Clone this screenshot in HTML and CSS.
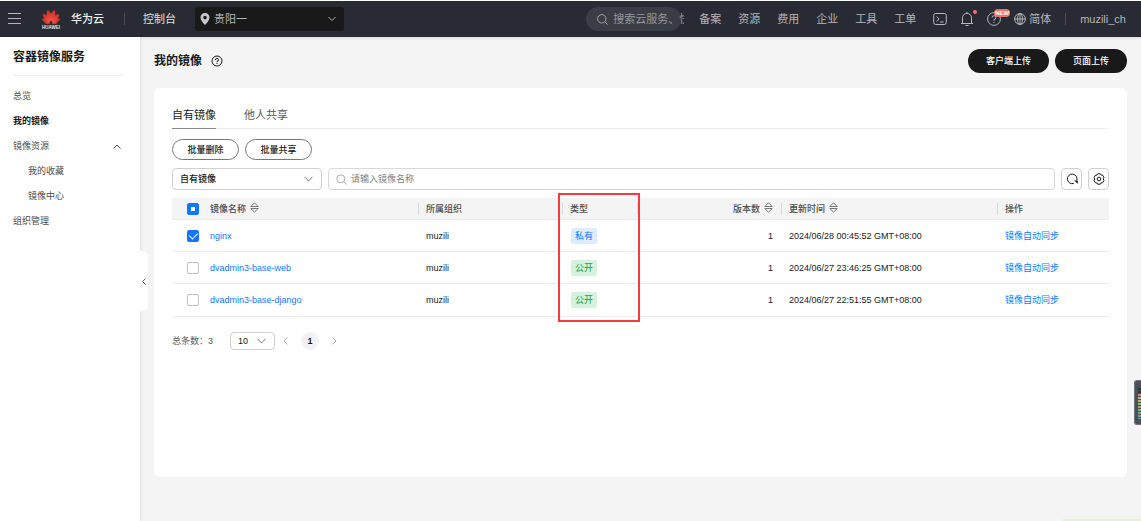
FILE: index.html
```html
<!DOCTYPE html>
<html lang="zh-CN">
<head>
<meta charset="utf-8">
<meta name="viewport" content="width=device-width, initial-scale=1">
<title>容器镜像服务</title>
<link rel="stylesheet" href="styles.css">
</head>
<body>
<header class="topbar">
  <button class="icon-btn menu" type="button" aria-label="菜单"><svg width="14" height="12" viewBox="0 0 14 12" stroke="currentColor" stroke-width="1"><path d="M0 .5h13M0 5.500h13M0 10.500h13"/></svg></button>
  <a class="brand" href="#">
    <svg class="logo" width="20" height="22" viewBox="0 0 40 44" role="img" aria-label="HUAWEI">
      <defs>
        <linearGradient id="petal-fill" x1="0" y1="1" x2="0" y2="0"><stop offset="0" stop-color="#f0584a"/><stop offset="1" stop-color="#cf2a22"/></linearGradient>
        <path id="petal" fill="url(#petal-fill)" d="M0-3C-5-9-6-18-2-25q2-3 4 0C6-18 5-9 0-3z"/>
      </defs>
      <g transform="translate(20 30)">
        <use href="#petal" transform="rotate(-14)"/>
        <use href="#petal" transform="rotate(14)"/>
        <use href="#petal" transform="rotate(-42) scale(.9)"/>
        <use href="#petal" transform="rotate(42) scale(.9)"/>
        <use href="#petal" transform="rotate(-66) scale(.75)"/>
        <use href="#petal" transform="rotate(66) scale(.75)"/>
        <use href="#petal" transform="rotate(-88) scale(.5)"/>
        <use href="#petal" transform="rotate(88) scale(.5)"/>
      </g>
      <text class="logo-text" x="20" y="42" text-anchor="middle">HUAWEI</text>
    </svg>
    <span>华为云</span>
  </a>
  <span class="bar"></span>
  <a class="console" href="#">控制台</a>
  <div class="region">
    <svg class="pin" width="10" height="12" viewBox="0 0 10 12"><path fill="currentColor" fill-rule="evenodd" d="M5 0a4.500 4.500 0 0 0-4.500 4.500C.5 7.500 5 12 5 12s4.500-4.500 4.500-7.500A4.500 4.500 0 0 0 5 0zm0 2.800a1.800 1.800 0 1 1 0 3.600 1.800 1.800 0 0 1 0-3.600z"/></svg>
    <select aria-label="区域"><option>贵阳一</option></select>
    <svg class="chev" width="8" height="5" viewBox="0 0 8 5" fill="none" stroke="currentColor"><path d="M.5.5 4 4 7.500.5"/></svg>
  </div>
  <div class="top-right">
    <label class="top-search">
      <svg width="11" height="11" viewBox="0 0 11 11" fill="none" stroke="currentColor"><circle cx="4.800" cy="4.800" r="4.200"/><path d="m8 8 2.600 2.600"/></svg>
      <input type="text" aria-label="搜索" placeholder="搜索云服务、快捷操作">
    </label>
    <nav class="top-nav">
      <a href="#">备案</a><a href="#">资源</a><a href="#">费用</a><a href="#">企业</a><a href="#">工具</a><a href="#">工单</a>
    </nav>
    <div class="tools">
      <button class="icon-btn" type="button" aria-label="终端"><svg width="14" height="14" viewBox="0 0 14 14" fill="none" stroke="currentColor"><rect x=".7" y="1.500" width="12.600" height="11" rx="2"/><path d="m3.500 4.500 2.600 2.500-2.600 2.500M7 10h3.500"/></svg></button>
      <button class="icon-btn" type="button" aria-label="通知"><svg width="14" height="14" viewBox="0 0 14 14" fill="none" stroke="currentColor"><path d="M1 11.500h12M2.500 11.500V5.800a4.500 4.500 0 0 1 9 0v5.700M5.500 13.500h3M7 0v1.500"/></svg><i class="dot"></i></button>
      <button class="icon-btn" type="button" aria-label="帮助"><svg width="14" height="14" viewBox="0 0 14 14" fill="none" stroke="currentColor"><circle cx="7" cy="7" r="6.400"/><path d="M5.100 5.600A1.900 1.900 0 1 1 7 7.500v1.200M7 9.800v1.200"/></svg><b class="new">NEW</b></button>
      <a class="lang" href="#"><svg width="12" height="12" viewBox="0 0 12 12" fill="none" stroke="currentColor"><circle cx="6" cy="6" r="5.400"/><ellipse cx="6" cy="6" rx="2.500" ry="5.400"/><path d="M.6 6h10.800M6 .6v10.800"/></svg>简体</a>
    </div>
    <span class="bar"></span>
    <a class="user" href="#">muzili_ch</a>
  </div>
</header>

<div class="layout">
  <aside class="sidebar">
    <h1>容器镜像服务</h1>
    <nav>
      <a href="#">总览</a>
      <a class="current" href="#">我的镜像</a>
      <a class="group" href="#">镜像资源<svg width="8" height="5" viewBox="0 0 8 5" fill="none" stroke="currentColor"><path d="M.5 4.500 4 1l3.500 3.500"/></svg></a>
      <a class="sub" href="#">我的收藏</a>
      <a class="sub" href="#">镜像中心</a>
      <a href="#">组织管理</a>
    </nav>
    <button class="collapse" type="button" aria-label="收起"><svg width="4" height="7" viewBox="0 0 4 7" fill="none" stroke="currentColor"><path d="M3.500.5.7 3.500l2.800 3"/></svg></button>
  </aside>

  <main>
    <div class="page-head">
      <h2>我的镜像</h2>
      <svg class="help" width="12" height="12" viewBox="0 0 12 12" fill="none" stroke="currentColor"><circle cx="6" cy="6" r="5"/><path d="M4.500 5A1.500 1.500 0 1 1 6 6.400v.8M6 8v1"/></svg>
      <div class="head-actions">
        <button class="primary" type="button">客户端上传</button>
        <button class="primary" type="button">页面上传</button>
      </div>
    </div>

    <section class="card">
      <div class="tabs" role="tablist">
        <button class="tab active" role="tab" aria-selected="true" type="button">自有镜像</button>
        <button class="tab" role="tab" aria-selected="false" type="button">他人共享</button>
      </div>
      <div class="batch">
        <button class="outline" type="button">批量删除</button>
        <button class="outline" type="button">批量共享</button>
      </div>
      <div class="filters">
        <div class="select kind">
          <select aria-label="镜像类别"><option>自有镜像</option></select>
          <svg class="chev" width="9" height="6" viewBox="0 0 9 6" fill="none" stroke="currentColor"><path d="M.5.8 4.500 5 8.500.8"/></svg>
        </div>
        <label class="search">
          <svg width="11" height="11" viewBox="0 0 11 11" fill="none" stroke="currentColor"><circle cx="4.800" cy="4.800" r="4"/><path d="m8 8 2.500 2.500"/></svg>
          <input type="text" aria-label="镜像名称" placeholder="请输入镜像名称">
        </label>
        <button class="square" type="button" aria-label="刷新"><svg width="12" height="12" viewBox="0 0 12 12" fill="none" stroke="currentColor"><path d="M7.800 10.400A4.800 4.800 0 1 1 10.700 7.500"/><path d="M8.200 7.500h3.600v3.300z" fill="currentColor" stroke="none"/></svg></button>
        <button class="square" type="button" aria-label="设置"><svg width="12" height="12" viewBox="0 0 12 12" fill="none" stroke="currentColor"><path d="M4.700.8h2.600l.8 1.300 1.600.1 1.200 2.200L10.200 6l.7 1.500-1.200 2.200-1.600.2-.8 1.300H4.700l-.8-1.300-1.600-.2-1.200-2.200L1.800 6l-.7-1.600 1.200-2.200 1.600-.1z"/><circle cx="6" cy="6" r="1.800"/></svg></button>
      </div>

      <table>
        <colgroup><col class="c-check"><col class="c-name"><col class="c-org"><col class="c-type"><col class="c-ver"><col class="c-time"><col class="c-op"></colgroup>
        <thead>
          <tr>
            <th class="check"><input class="mixed" type="checkbox" aria-label="全选"></th>
            <th class="first">镜像名称<svg class="sort" width="9" height="11" viewBox="0 0 9 11" fill="none" stroke="currentColor"><path d="M.8 4.500h7.400L4.500.8zM.8 6.500h7.400L4.500 10.200z"/></svg></th>
            <th>所属组织</th>
            <th>类型<span class="highlight"></span></th>
            <th class="num">版本数<svg class="sort" width="9" height="11" viewBox="0 0 9 11" fill="none" stroke="currentColor"><path d="M.8 4.500h7.400L4.500.8zM.8 6.500h7.400L4.500 10.200z"/></svg></th>
            <th>更新时间<svg class="sort" width="9" height="11" viewBox="0 0 9 11" fill="none" stroke="currentColor"><path d="M.8 4.500h7.400L4.500.8zM.8 6.500h7.400L4.500 10.200z"/></svg></th>
            <th>操作</th>
          </tr>
        </thead>
        <tbody>
          <tr>
            <td class="check"><input type="checkbox" aria-label="nginx" checked></td>
            <td><a href="#">nginx</a></td><td>muzili</td><td><span class="tag private">私有</span></td>
            <td class="num">1</td><td>2024/06/28 00:45:52 GMT+08:00</td><td><a href="#">镜像自动同步</a></td>
          </tr>
          <tr>
            <td class="check"><input type="checkbox" aria-label="dvadmin3-base-web"></td>
            <td><a href="#">dvadmin3-base-web</a></td><td>muzili</td><td><span class="tag public">公开</span></td>
            <td class="num">1</td><td>2024/06/27 23:46:25 GMT+08:00</td><td><a href="#">镜像自动同步</a></td>
          </tr>
          <tr>
            <td class="check"><input type="checkbox" aria-label="dvadmin3-base-django"></td>
            <td><a href="#">dvadmin3-base-django</a></td><td>muzili</td><td><span class="tag public">公开</span></td>
            <td class="num">1</td><td>2024/06/27 22:51:55 GMT+08:00</td><td><a href="#">镜像自动同步</a></td>
          </tr>
        </tbody>
      </table>

      <div class="pager">
        <span>总条数：3</span>
        <div class="select size">
          <select aria-label="每页条数"><option>10</option></select>
          <svg class="chev" width="9" height="6" viewBox="0 0 9 6" fill="none" stroke="currentColor"><path d="M.5.8 4.500 5 8.500.8"/></svg>
        </div>
        <button class="icon-btn" type="button" aria-label="上一页"><svg width="5" height="8" viewBox="0 0 5 8" fill="none" stroke="currentColor"><path d="M4.500.5 1 4l3.500 3.500"/></svg></button>
        <button class="page" type="button">1</button>
        <button class="icon-btn" type="button" aria-label="下一页"><svg width="5" height="8" viewBox="0 0 5 8" fill="none" stroke="currentColor"><path d="M.5.5 4 4 .5 7.500"/></svg></button>
      </div>
    </section>
  </main>
</div>

<div class="meter" aria-hidden="true"><i></i></div>
<div class="toast-edge"></div>
</body>
</html>
```

FILE: styles.css
```css
* { box-sizing: border-box; }

body {
  margin: 0;
  min-height: 100vh;
  display: flex;
  flex-direction: column;
  position: relative;
  overflow-x: hidden;
  border-top: 1px solid #fff;
  background: #f4f4f4;
  color: #191919;
  font: 9px/14px "Liberation Sans", "Noto Sans CJK SC", sans-serif;
}

a { color: inherit; text-decoration: none; }
button, input, select { font: inherit; color: inherit; margin: 0; }
button { border: 0; background: none; padding: 0; cursor: pointer; white-space: nowrap; }
svg { display: block; flex: none; }
select { appearance: none; border: 0; background: none; width: 100%; height: 100%; outline: 0; }
input[type="text"] { border: 0; background: none; outline: 0; padding: 0; min-width: 0; flex: 1; }
h1, h2 { margin: 0; font-size: 12px; line-height: 18px; font-weight: 700; }

.icon-btn { position: relative; display: flex; align-items: center; justify-content: center; }
.chev { position: absolute; right: 8px; top: 50%; transform: translateY(-50%); pointer-events: none; }

/* top bar */
.topbar {
  display: flex;
  align-items: center;
  height: 36px;
  padding: 0 15px 0 8px;
  background: #282b33;
  color: #b4b6bb;
  font-size: 11px;
  line-height: 16px;
  box-shadow: 0 1px 3px rgba(0, 0, 0, .12);
  position: relative;
  white-space: nowrap;
}
.brand { display: flex; align-items: center; gap: 10px; margin-left: 19px; color: #f2f2f2; font-weight: 500; }
.logo-text { font: 700 9px "Liberation Sans", sans-serif; fill: #e6e6e6; }
.bar { width: 1px; height: 12px; background: #4a4d55; }
.brand + .bar { margin-left: 20px; }
.console { margin-left: 18px; font-weight: 500; color: #c5c7cc; }
.region { position: relative; width: 149px; height: 24px; margin-left: 19px; background: #191919; border-radius: 3px; }
.region select { padding: 0 24px 0 19px; }
.pin { position: absolute; left: 5px; top: 6px; color: #c5c7cc; }
.top-right { display: flex; align-items: center; margin-left: auto; }
.top-search {
  display: flex;
  align-items: center;
  gap: 5px;
  width: 95px;
  height: 24px;
  padding-left: 11px;
  border-radius: 12px;
  background: #3a3d45;
  color: #a0a2a6;
}
.top-search input { margin-right: -3px; text-overflow: clip; }
.top-search input::placeholder { color: #96989c; opacity: 1; }
.top-nav { display: flex; gap: 17px; margin-left: 18px; }
.tools { display: flex; align-items: center; gap: 13px; margin-left: 17px; }
.dot { position: absolute; right: -3px; top: -2px; width: 4px; height: 4px; border-radius: 50%; background: #f66f6a; }
.new {
  position: absolute;
  left: 7px;
  top: -3px;
  padding: 0 1px;
  border-radius: 4px;
  background: #f66f6a;
  color: #fff;
  font-size: 6px;
  line-height: 8px;
}
.lang { display: flex; align-items: center; gap: 3px; }
.tools + .bar { margin: 0 14px; }

/* layout */
.layout { flex: 1; display: flex; }
.sidebar {
  position: relative;
  flex: none;
  width: 140px;
  padding: 11px 19px 0 13px;
  background: #fff;
  box-shadow: 1px 0 3px rgba(0, 0, 0, .08);
  color: #4d4d4d;
}
.sidebar h1 { color: #191919; padding-bottom: 9px; border-bottom: 1px solid #ededed; margin-right: -3px; }
.sidebar nav { display: flex; flex-direction: column; padding-top: 8px; }
.sidebar nav a { line-height: 25px; }
.sidebar .current { color: #191919; font-weight: 700; }
.sidebar .group { display: flex; align-items: center; justify-content: space-between; }
.sidebar .sub { padding-left: 15px; }
.collapse {
  position: absolute;
  left: 100%;
  top: 214px;
  width: 8px;
  height: 60px;
  border-radius: 0 6px 6px 0;
  background: #fff;
  color: #595959;
  display: flex;
  align-items: center;
  justify-content: center;
}

main { flex: 1; min-width: 0; display: flex; flex-direction: column; padding: 12px 14px 44px; }
.page-head { display: flex; align-items: center; height: 24px; margin-bottom: 15px; }
.help { margin-left: 9px; }
.head-actions { display: flex; gap: 6px; margin-left: auto; }
.primary { height: 24px; padding: 0 18px; border-radius: 12px; background: #191919; color: #fff; font-weight: 500; }

.card { flex: 1; padding: 14px 18px; border-radius: 6px; background: #fff; }
.tabs { display: flex; gap: 28px; border-bottom: 1px solid #ededed; }
.tab { height: 27px; margin-bottom: -1px; font-size: 11px; line-height: 26px; color: #595959; border-bottom: 1px solid transparent; }
.tab.active { color: #191919; border-color: #8a8a8a; }
.batch { display: flex; gap: 6px; margin-top: 10px; }
.outline { width: 67px; height: 21px; border: 1px solid #777; border-radius: 11px; font-weight: 500; }
.filters { display: flex; gap: 6px; margin: 8px 0; }
.select { position: relative; border: 1px solid #d0d0d0; border-radius: 4px; }
.select .chev { color: #777; }
.kind { width: 150px; height: 22px; font-weight: 500; }
.kind select { padding: 0 20px 0 7px; }
.search { flex: 1; display: flex; align-items: center; gap: 4px; height: 22px; padding: 0 7px; border: 1px solid #d8d8d8; border-radius: 4px; color: #aaa; }
.search input { color: #191919; }
.search input::placeholder { color: #808080; opacity: 1; }
.square { width: 21px; height: 22px; display: flex; align-items: center; justify-content: center; border: 1px solid #d0d0d0; border-radius: 4px; }

/* table */
table { width: 100%; table-layout: fixed; border-collapse: separate; border-spacing: 0; }
.c-check { width: 30px; }
.c-name, .c-time { width: 216px; }
.c-org, .c-ver { width: 144px; }
.c-type { width: 75px; }
.c-op { width: 112px; }
th, td { position: relative; padding: 0 8px; text-align: left; vertical-align: middle; white-space: nowrap; border-bottom: 1px solid #ebebeb; }
th { height: 22px; background: #f4f4f4; color: #4d4d4d; font-weight: 500; }
th:nth-child(n+3)::before { content: ""; position: absolute; left: 0; top: 5px; height: 12px; width: 1px; background: #dcdcdc; }
td { height: 32px; }
tbody tr:last-child td { height: 33px; }
td a { color: #1476ff; }
.check { padding: 0 0 0 15px; }
.num { text-align: right; }
.sort { display: inline-block; margin-left: 4px; vertical-align: -1px; color: #777; }
input[type="checkbox"] {
  appearance: none;
  display: block;
  width: 12px;
  height: 12px;
  border: 1px solid #c2c2c2;
  border-radius: 2px;
  background: #fff;
  position: relative;
}
input[type="checkbox"]:checked, input.mixed { border-color: #1476ff; background: #1476ff; }
input[type="checkbox"]:checked::after {
  content: "";
  position: absolute;
  left: 3px;
  top: 0;
  width: 4px;
  height: 7px;
  border: solid #fff;
  border-width: 0 1px 1px 0;
  transform: rotate(45deg);
}
input.mixed::after { content: ""; position: absolute; inset: 3px; background: #fff; }
.tag { display: inline-block; padding: 0 4px; margin-left: 1px; line-height: 16px; border-radius: 2px; }
.private { background: #deecff; color: #1476ff; }
.public { background: #d4f2dc; color: #1a9c47; }
.highlight { position: absolute; left: -4px; top: -5px; right: -3px; height: 129px; border: 2px solid #f43c3c; z-index: 1; pointer-events: none; }

/* pagination */
.pager { display: flex; align-items: center; margin-top: 15px; color: #595959; }
.size { width: 45px; height: 18px; margin: 0 8px 0 17px; color: #191919; }
.size select { padding: 0 16px 0 7px; }
.pager .icon-btn { color: #aaa; }
.page { width: 18px; height: 18px; margin: 0 13px; border-radius: 50%; background: #f2f2f2; font-weight: 700; color: #191919; }

/* floating level meter on the window edge */
.meter { position: absolute; right: 0; top: 379px; width: 7px; height: 45px; padding: 6px 0 5px 3px; border: 1px solid #70747d; border-right: 0; border-radius: 3px 0 0 3px; background: #4b4f5b; }
.meter i {
  display: block;
  height: 100%;
  background:
    repeating-linear-gradient(#4b4f5b 0 1px, transparent 1px 3px),
    linear-gradient(#2d303b 0 20%, #d98a4a 22%, #c9b750 38%, #8fb95f 60%, #46b3a2 100%);
}
.toast-edge { position: absolute; right: 0; bottom: 0; width: 79px; height: 2px; border-radius: 4px 0 0 0; background: #e0f3da; }
```
